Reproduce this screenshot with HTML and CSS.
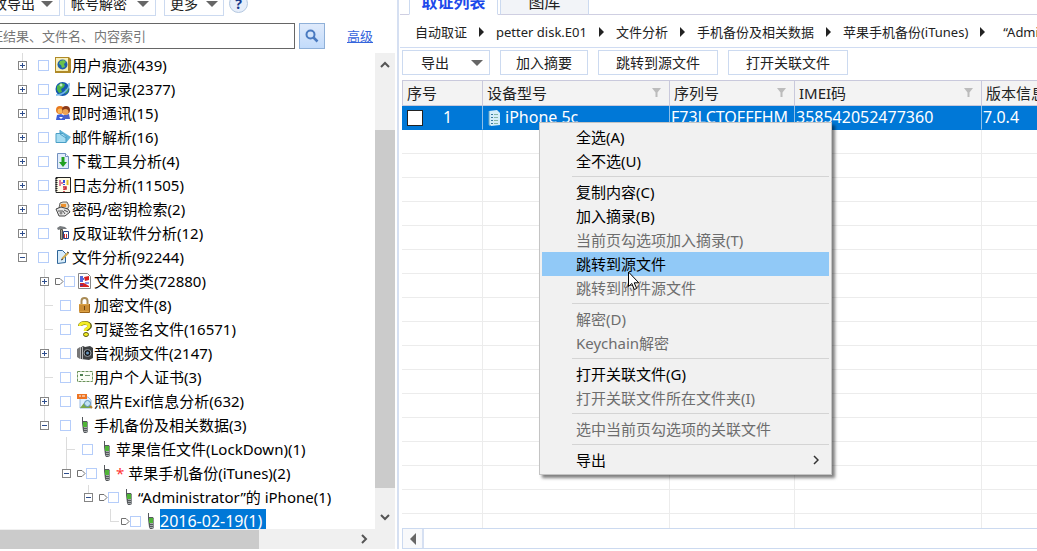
FILE: index.html
```html
<!DOCTYPE html>
<html lang="zh-CN">
<head>
<meta charset="utf-8">
<title>取证分析</title>
<link rel="stylesheet" href="styles.css">
</head>
<body>
<svg class="defs" aria-hidden="true">
  <symbol id="phone" viewBox="0 0 16 16"><path d="M5 0h1v4h4l1 2v9l-2 1H7l-1-2L5 6z" fill="#55595c"/><path d="M6 5h4v5H6z" fill="#4fb437"/><path d="M7 10h3v5H7z" fill="#a5a9ac"/><path d="M7 11.500h3M7 13.500h3" stroke="#55595c"/><path d="M10.500 6v9" stroke="#8b8f92"/></symbol>
  <symbol id="flag" viewBox="0 0 9 9"><path d="M.5 1.500h4.500l3 3-3 3H.5z" fill="#fff" stroke="#707070"/></symbol>
  <symbol id="filter" viewBox="0 0 10 10"><path d="M0 0h9L5.500 4.500V9h-2V4.500z" fill="#bcbcbc"/></symbol>
  <symbol id="down" viewBox="0 0 12 6"><path d="M0 0h12L6 6z" fill="#666"/></symbol>
  <symbol id="crumb" viewBox="0 0 5 10"><path d="M0 0l5 5-5 5z" fill="#222"/></symbol>
</svg>
<div class="app">
  <aside class="side">
    <div class="side-tools">
      <button class="tool tool-first">修改导出<svg width="12" height="6"><use href="#down"/></svg></button>
      <button class="tool tool-mid">帐号解密<svg width="12" height="6"><use href="#down"/></svg></button>
      <button class="tool tool-more">更多<svg width="12" height="6"><use href="#down"/></svg></button>
      <button class="help" aria-label="帮助">?</button>
    </div>
    <div class="search">
      <input class="search-box" type="text" placeholder="证结果、文件名、内容索引" aria-label="搜索">
      <button class="search-btn" aria-label="查找"><svg width="14" height="14" viewBox="0 0 14 14" fill="none" stroke="#4a7ac0"><circle cx="5.500" cy="5.500" r="4" stroke-width="2"/><path d="M8.500 8.500l4 4" stroke-width="2.500"/></svg></button>
      <a class="advanced" href="#">高级</a>
    </div>
    <div class="tree-area">
      <div class="tree-view">
        <ul class="tree">
          <li><div class="row"><button class="exp plus" aria-label="展开"></button><label class="pick"><input type="checkbox" aria-label="用户痕迹"></label>
            <svg class="ico" viewBox="0 0 16 16"><path d="M0 0h14l2 2v14H0z" fill="#b08a28"/><path d="M1 1h12v13H1z" fill="#f8efb8"/><circle cx="7.500" cy="7.500" r="5" fill="#1e5fae"/><path d="M5 4l4-1 2 2-2 2 1 3-3 1-1-3-2-1z" fill="#6ac24a"/></svg>
            <span class="name">用户痕迹(439)</span></div></li>
          <li><div class="row"><button class="exp plus" aria-label="展开"></button><label class="pick"><input type="checkbox" aria-label="上网记录"></label>
            <svg class="ico" viewBox="0 0 16 16"><circle cx="7.500" cy="8" r="7" fill="#1558b0"/><path d="M2 5l4-3 4 1-1 3-3 2 1 3-3 1-2-3z" fill="#4fb548"/><path d="M10 8l4-1-1 4-3 2z" fill="#3c9c5a"/><path d="M1 14C9 14 15 7 14 2" fill="none" stroke="#6fb5e8" stroke-width="1.500"/><circle cx="6" cy="4" r="1.500" fill="#c5e9c8"/></svg>
            <span class="name">上网记录(2377)</span></div></li>
          <li><div class="row"><button class="exp plus" aria-label="展开"></button><label class="pick"><input type="checkbox" aria-label="即时通讯"></label>
            <svg class="ico" viewBox="0 0 16 16"><path d="M1 15l1-5 4-1 4 2v4z" fill="#3d5fd8"/><path d="M8 14l1-4 5-1 1 5z" fill="#4a62c8"/><circle cx="5" cy="5" r="4" fill="#e8791e"/><circle cx="11" cy="5" r="4" fill="#8a3a1a"/><circle cx="5" cy="6" r="2.500" fill="#f6b95c"/><circle cx="10.500" cy="7" r="3" fill="#eda354"/><path d="M4 12l2 2 2-2z" fill="#fff"/></svg>
            <span class="name">即时通讯(15)</span></div></li>
          <li><div class="row"><button class="exp plus" aria-label="展开"></button><label class="pick"><input type="checkbox" aria-label="邮件解析"></label>
            <svg class="ico" viewBox="0 0 16 16"><path d="M5 1l11 7-5 6H5z" fill="#62b4d8"/><path d="M1 4.500h7l3 3v6H1z" fill="#a5dcf2" stroke="#4b9fc6"/><path d="M5 1v4l6 4" fill="none" stroke="#4b9fc6"/></svg>
            <span class="name">邮件解析(16)</span></div></li>
          <li><div class="row"><button class="exp plus" aria-label="展开"></button><label class="pick"><input type="checkbox" aria-label="下载工具分析"></label>
            <svg class="ico" viewBox="0 0 16 16"><path d="M2.500.5h8l3 3v12h-11z" fill="#e1ecfb" stroke="#7290bf"/><path d="M10.500.5v3h3" fill="#fff" stroke="#7290bf"/><path d="M6.500 4h3v5H12l-4 5-4-5h2.500z" fill="#20a020"/></svg>
            <span class="name">下载工具分析(4)</span></div></li>
          <li><div class="row"><button class="exp plus" aria-label="展开"></button><label class="pick"><input type="checkbox" aria-label="日志分析"></label>
            <svg class="ico" viewBox="0 0 16 16"><path d="M1 .5h14.500v15H1z" fill="#fffbe8" stroke="#222"/><path d="M1.500 1v14" stroke="#222" stroke-width="2" stroke-dasharray="1 1"/><path d="M5 3v6M4 6h4" stroke="#db7a9a" stroke-width="2"/><path d="M9 3v3M9 7v1" stroke="#3450e0" stroke-width="2"/><path d="M12.500 3v5" stroke="#e5ba24" stroke-width="2"/><path d="M8 10h3v2H9v1M9 14v1" stroke="#c61e2e" fill="none" stroke-width="1.500"/></svg>
            <span class="name">日志分析(11505)</span></div></li>
          <li><div class="row"><button class="exp plus" aria-label="展开"></button><label class="pick"><input type="checkbox" aria-label="密码/密钥检索"></label>
            <svg class="ico" viewBox="0 0 16 16"><path d="M4 7l1-5 3-1h4l2 4-2 4z" fill="#e8dcc4" stroke="#666"/><path d="M6 3h5v3H6z" fill="#ee912c"/><path d="M1 8l5-2 7 2 2 3-5 4H4z" fill="#e6e6e6" stroke="#444"/><path d="M3 10h5l2 3M9 9l4 2" stroke="#555" fill="none"/><circle cx="6" cy="12" r="1.500" fill="#888"/></svg>
            <span class="name">密码/密钥检索(2)</span></div></li>
          <li><div class="row"><button class="exp plus" aria-label="展开"></button><label class="pick"><input type="checkbox" aria-label="反取证软件分析"></label>
            <svg class="ico" viewBox="0 0 16 16"><path d="M2 3l3-2 5 1 2 2H7L3 5z" fill="#777b7e"/><path d="M5.500 4.500h2v10h-2z" fill="#a6a38e" stroke="#55524a"/><path d="M8.500 6.500h5v7h-5z" fill="#fff" stroke="#24448a"/><path d="M9.500 13v-4M11.500 13V9" stroke="#d03232"/></svg>
            <span class="name">反取证软件分析(12)</span></div></li>
          <li><div class="row"><button class="exp minus" aria-label="折叠"></button><label class="pick"><input type="checkbox" aria-label="文件分析"></label>
            <svg class="ico" viewBox="0 0 16 16"><path d="M2.500 1.500h5l3 3v9l-8 1z" fill="#d7ecfb" stroke="#2e6598"/><path d="M7 10l6-6" fill="none" stroke="#d0a94c" stroke-width="2"/><path d="M6 11l2-1M12 3l2 1" stroke="#333"/></svg>
            <span class="name">文件分析(92244)</span></div>
            <ul>
              <li><div class="row"><button class="exp plus" aria-label="展开"></button><label class="pick flagged"><svg width="9" height="9"><use href="#flag"/></svg><input type="checkbox" aria-label="文件分类"></label>
                <svg class="ico" viewBox="0 0 16 16"><path d="M1.500.5h9l3 3v12h-12z" fill="#fff" stroke="#888"/><path d="M3 4h3M3 6h4M3 8h3" stroke="#2038d0" stroke-width="1.500"/><path d="M7 4l5-1v4l-4 1zM3 10h4l5 3v1H3z" fill="#d82323"/><path d="M8 10h4M3 12h3" stroke="#2038d0"/></svg>
                <span class="name">文件分类(72880)</span></div></li>
              <li><div class="row"><span class="exp-none"></span><label class="pick"><input type="checkbox" aria-label="加密文件"></label>
                <svg class="ico" viewBox="0 0 16 16"><path d="M4.500 8V4a3 3 0 0 1 6 0v4" fill="none" stroke="#a98b55" stroke-width="2"/><path d="M2 7h11v8H2z" fill="#dca144"/><path d="M2 9h11M2 11h11M2 13h11" stroke="#b87b27"/><path d="M7 9h1v4H7z" fill="#6f4512"/><path d="M12.500 7v8.500h-10" fill="none" stroke="#996218"/></svg>
                <span class="name">加密文件(8)</span></div></li>
              <li><div class="row"><span class="exp-none"></span><label class="pick"><input type="checkbox" aria-label="可疑签名文件"></label>
                <svg class="ico" viewBox="0 0 16 16"><path d="M3 5c0-4 10-4 10 0 0 3-4 2-4 5" fill="none" stroke="#5e5c14" stroke-width="4"/><path d="M3 5c0-4 9-4 9 0 0 3-4 2-4 5" fill="none" stroke="#f3ec24" stroke-width="3"/><ellipse cx="9" cy="13.500" rx="2.500" ry="2" fill="#f3ec24" stroke="#5e5c14"/></svg>
                <span class="name">可疑签名文件(16571)</span></div></li>
              <li><div class="row"><button class="exp plus" aria-label="展开"></button><label class="pick"><input type="checkbox" aria-label="音视频文件"></label>
                <svg class="ico" viewBox="0 0 16 16"><path d="M0 4l3-2v12l-3-2z" fill="#777"/><path d="M3 3l3-2 2 1 5-1 3 2v10l-4 2-8-1z" fill="#3f4143"/><path d="M3.500 3v11M5.500 2v12" stroke="#bbb"/><circle cx="10.500" cy="8" r="3.500" fill="#17191b" stroke="#9aa0a6"/><circle cx="10.500" cy="8" r="1.500" fill="#6a96bd"/></svg>
                <span class="name">音视频文件(2147)</span></div></li>
              <li><div class="row"><span class="exp-none"></span><label class="pick"><input type="checkbox" aria-label="用户个人证书"></label>
                <svg class="ico" viewBox="0 0 16 16"><path d="M.5 2.500h15v10H.5z" fill="#fbfff6" stroke="#6b925a" stroke-dasharray="3 1"/><path d="M3 5h3v2H3z" fill="#4e8150"/><path d="M8 6.500h5M4 10.500h2" stroke="#739773"/></svg>
                <span class="name">用户个人证书(3)</span></div></li>
              <li><div class="row"><button class="exp plus" aria-label="展开"></button><label class="pick"><input type="checkbox" aria-label="照片Exif信息分析"></label>
                <svg class="ico" viewBox="0 0 16 16"><path d="M3 4h8l3 3v8H3z" fill="#dfefff" stroke="#9cbbe0"/><path d="M0 1h10v5H0z" fill="#ed7423"/><path d="M2 3h2M5 3h3" stroke="#fff"/><path d="M3 15l4-5 3 3 2-2 2 4z" fill="#7ba84a"/><circle cx="10.500" cy="10.500" r="3" fill="#c2e2f5" stroke="#5790b7"/><path d="M13 13l2 2" stroke="#b08030" stroke-width="2"/></svg>
                <span class="name">照片Exif信息分析(632)</span></div></li>
              <li><div class="row"><button class="exp minus" aria-label="折叠"></button><label class="pick"><input type="checkbox" aria-label="手机备份及相关数据"></label><svg class="ico"><use href="#phone"/></svg><span class="name">手机备份及相关数据(3)</span></div>
                <ul>
                  <li><div class="row"><span class="exp-none"></span><label class="pick"><input type="checkbox" aria-label="苹果信任文件"></label><svg class="ico"><use href="#phone"/></svg><span class="name">苹果信任文件(LockDown)(1)</span></div></li>
                  <li><div class="row"><button class="exp minus" aria-label="折叠"></button><label class="pick flagged"><svg width="9" height="9"><use href="#flag"/></svg><input type="checkbox" aria-label="苹果手机备份"></label><svg class="ico"><use href="#phone"/></svg><span class="name"><span class="star">*</span> 苹果手机备份(iTunes)(2)</span></div>
                    <ul>
                      <li><div class="row"><button class="exp minus" aria-label="折叠"></button><label class="pick flagged"><svg width="9" height="9"><use href="#flag"/></svg><input type="checkbox" aria-label="Administrator"></label><svg class="ico"><use href="#phone"/></svg><span class="name">“Administrator”的 iPhone(1)</span></div>
                        <ul>
                          <li><div class="row"><span class="exp-none"></span><label class="pick flagged"><svg width="9" height="9"><use href="#flag"/></svg><input type="checkbox" aria-label="2016-02-19"></label><svg class="ico"><use href="#phone"/></svg><span class="name selected">2016-02-19(1)</span></div></li>
                        </ul></li>
                    </ul></li>
                </ul></li>
            </ul></li>
        </ul>
      </div>
      <div class="vscroll">
        <svg width="10" height="7" viewBox="0 0 10 7"><path d="M1 6l4-4 4 4" fill="none" stroke="#555" stroke-width="2"/></svg>
        <div class="vthumb"></div>
        <svg width="10" height="7" viewBox="0 0 10 7"><path d="M1 1l4 4 4-4" fill="none" stroke="#555" stroke-width="2"/></svg>
      </div>
    </div>
    <div class="hscroll"><div class="hthumb"></div><svg width="7" height="10" viewBox="0 0 7 10"><path d="M1 1l4 4-4 4" fill="none" stroke="#555" stroke-width="2"/></svg></div>
  </aside>

  <main class="main">
    <nav class="tabs"><button class="tab active">取证列表</button><button class="tab">图库</button></nav>
    <nav class="crumbs">
      <span>自动取证</span><svg width="5" height="10"><use href="#crumb"/></svg>
      <span>petter disk.E01</span><svg width="5" height="10"><use href="#crumb"/></svg>
      <span>文件分析</span><svg width="5" height="10"><use href="#crumb"/></svg>
      <span>手机备份及相关数据</span><svg width="5" height="10"><use href="#crumb"/></svg>
      <span>苹果手机备份(iTunes)</span><svg width="5" height="10"><use href="#crumb"/></svg>
      <span class="crumb-last">“Administrator”的 iPhone</span>
    </nav>
    <div class="actions">
      <button class="action action-drop">导出<svg width="12" height="6"><use href="#down"/></svg></button>
      <button class="action">加入摘要</button>
      <button class="action action-wide">跳转到源文件</button>
      <button class="action action-wide">打开关联文件</button>
    </div>
    <div class="grid">
      <table>
        <colgroup><col class="c-no"><col class="c-model"><col class="c-serial"><col class="c-imei"><col class="c-ver"></colgroup>
        <thead><tr>
          <th>序号</th>
          <th><div class="head">设备型号<svg width="10" height="10"><use href="#filter"/></svg></div></th>
          <th><div class="head">序列号<svg width="10" height="10"><use href="#filter"/></svg></div></th>
          <th><div class="head">IMEI码<svg width="10" height="10"><use href="#filter"/></svg></div></th>
          <th>版本信息</th>
        </tr></thead>
        <tbody>
          <tr class="picked">
            <td><label class="num"><input type="checkbox">1</label></td>
            <td><div class="model"><svg width="12" height="16" viewBox="0 0 12 16"><path d="M1 1l8-1 3 3v12l-9 1-2-1z" fill="#d4eef9"/><path d="M1 1v14l2 1" fill="none" stroke="#6ba5c4"/><path d="M3 4.500h2M3 7.500h2M3 10.500h2M3 13.500h2" stroke="#38779e"/><path d="M6 4.500h4M6 7.500h4M6 10.500h4M6 13.500h4" stroke="#86b6a6"/></svg>iPhone 5c</div></td>
            <td>F73LCTQFFFHM</td><td>358542052477360</td><td>7.0.4</td>
          </tr>
          <tr><td></td><td></td><td></td><td></td><td></td></tr>
          <tr><td></td><td></td><td></td><td></td><td></td></tr>
          <tr><td></td><td></td><td></td><td></td><td></td></tr>
          <tr><td></td><td></td><td></td><td></td><td></td></tr>
          <tr><td></td><td></td><td></td><td></td><td></td></tr>
          <tr><td></td><td></td><td></td><td></td><td></td></tr>
          <tr><td></td><td></td><td></td><td></td><td></td></tr>
          <tr><td></td><td></td><td></td><td></td><td></td></tr>
          <tr><td></td><td></td><td></td><td></td><td></td></tr>
          <tr><td></td><td></td><td></td><td></td><td></td></tr>
          <tr><td></td><td></td><td></td><td></td><td></td></tr>
          <tr><td></td><td></td><td></td><td></td><td></td></tr>
          <tr><td></td><td></td><td></td><td></td><td></td></tr>
          <tr><td></td><td></td><td></td><td></td><td></td></tr>
          <tr><td></td><td></td><td></td><td></td><td></td></tr>
          <tr><td></td><td></td><td></td><td></td><td></td></tr>
          <tr><td></td><td></td><td></td><td></td><td></td></tr>
        </tbody>
      </table>
    </div>
    <div class="grid-scroll"><button aria-label="向左滚动"><svg width="6" height="12" viewBox="0 0 6 12"><path d="M6 0v12L0 6z" fill="#666"/></svg></button></div>
  </main>

  <div class="menu" role="menu">
    <button role="menuitem">全选(A)</button>
    <button role="menuitem">全不选(U)</button>
    <hr>
    <button role="menuitem">复制内容(C)</button>
    <button role="menuitem">加入摘录(B)</button>
    <button role="menuitem" disabled>当前页勾选项加入摘录(T)</button>
    <button role="menuitem" class="hot">跳转到源文件</button>
    <button role="menuitem" disabled>跳转到附件源文件</button>
    <hr>
    <button role="menuitem" disabled>解密(D)</button>
    <button role="menuitem" disabled>Keychain解密</button>
    <hr>
    <button role="menuitem">打开关联文件(G)</button>
    <button role="menuitem" disabled>打开关联文件所在文件夹(I)</button>
    <hr>
    <button role="menuitem" disabled>选中当前页勾选项的关联文件</button>
    <hr>
    <button role="menuitem">导出<svg width="6" height="10" viewBox="0 0 6 10"><path d="M1 1l4 4-4 4" fill="none" stroke="#333" stroke-width="1.500"/></svg></button>
  </div>
  <svg class="cursor" width="12" height="20" viewBox="0 0 12 20"><path d="M.5 1v14.500l3.300-3 2.500 6 2.400-1-2.500-5.700h4.600z" fill="#fff" stroke="#000"/></svg>
</div>
</body>
</html>
```

FILE: styles.css
```css
* { box-sizing: border-box; }

body {
  margin: 0;
  background: #fff;
  color: #000;
  font: 15px/24px "Noto Sans", "Noto Sans CJK SC", sans-serif;
}

button, input { font: inherit; color: inherit; margin: 0; padding: 0; }
svg { flex: none; display: block; }
.defs { display: none; }

.app {
  position: relative;
  display: flex;
  height: 100vh;
  padding-bottom: 2px;
  overflow: hidden;
}

/* Left pane */
.side {
  flex: 0 0 399px;
  display: flex;
  flex-direction: column;
  margin-right: 1px;
  border-right: 2px solid #d6e0f2;
  min-height: 0;
}

.side-tools {
  display: flex;
  align-items: flex-end;
  height: 16px;
  overflow: hidden;
  font-size: 14px;
}

.tool {
  display: flex;
  align-items: center;
  justify-content: flex-end;
  height: 25px;
  padding-right: 6px;
  margin-right: 4px;
  border: 1px solid #ccdaf0;
  background: #fff;
  color: #222;
  white-space: nowrap;
}
.tool-first { width: 60px; gap: 6px; border-left: 0; }
.tool-mid { width: 92px; gap: 10px; margin-right: 8px; }
.tool-more { width: 60px; gap: 8px; margin-right: 5px; padding-right: 5px; }

.help {
  width: 19px;
  height: 19px;
  margin-bottom: 3px;
  border: 1px solid #b4c8e0;
  border-radius: 50%;
  background: #e6eefa;
  color: #16398c;
  font-weight: bold;
  line-height: 16px;
}

.search {
  display: flex;
  align-items: center;
  height: 37px;
  padding-top: 3px;
  font-size: 13px;
}
.search-box {
  width: 307px;
  height: 26px;
  margin-left: -12px;
  padding-left: 1px;
  border: 1px solid #666;
  background: #fff;
}
.search-box::placeholder { color: #777; opacity: 1; }
.search-btn {
  display: grid;
  place-items: center;
  width: 26px;
  height: 26px;
  margin: 0 22px 0 4px;
  border: 1px solid #8fb0d8;
  background: linear-gradient(#dfeafb, #c2dbfb);
}
.advanced { color: #3565dc; }

.tree-area { flex: 1; display: flex; min-height: 0; margin-right: 2px; }
.tree-view { flex: 1; overflow: hidden; }

.tree, .tree ul { list-style: none; margin: 0; padding: 0; }
.tree { padding-left: 14px; }
.tree ul { padding-left: 22px; }
.tree li { position: relative; }
.tree li::before {
  content: "";
  position: absolute;
  top: 0;
  bottom: 0;
  left: 8px;
  width: 1px;
  background: #dcdcdc;
}
.tree li:last-child::before { bottom: auto; height: 12px; }

.row {
  display: flex;
  align-items: center;
  height: 24px;
  white-space: nowrap;
}
.exp, .exp-none { position: relative; flex: none; height: 9px; }
.exp { width: 9px; margin: 0 4px; border: 1px solid #858585; background: #fff; }
.exp::before, .exp.plus::after {
  content: "";
  position: absolute;
  inset: 3px 1px;
  background: #2d4d8d;
}
.exp.plus::after { inset: 1px 3px; }
.exp-none { width: 9px; height: 1px; margin-left: 8px; background: #dcdcdc; }

.pick { display: flex; align-items: center; width: 24px; padding-left: 7px; flex: none; }
.pick.flagged { padding-left: 2px; }
.pick input {
  appearance: none;
  width: 11px;
  height: 11px;
  border: 1px solid #b5cdfa;
  background: #fff;
}
.ico { width: 16px; height: 16px; margin-right: 1px; }
.name { line-height: 20px; }
.star { color: #f33; }
.selected { background: #0078d7; color: #fff; padding-right: 4px; font-size: 16px; line-height: 24px; }

.vscroll {
  display: flex;
  flex-direction: column;
  align-items: center;
  width: 20px;
  padding: 8px 0;
  background: #f0f0f0;
}
.vthumb { width: 100%; flex: 1; margin: 62px 0 26px; background: #cbcbcb; }
.hscroll {
  display: flex;
  align-items: center;
  justify-content: space-between;
  height: 20px;
  padding-right: 27px;
  margin-right: 2px;
  background: #f0f0f0;
}
.hthumb { width: 259px; height: 19px; background: #cbcbcb; }

/* Right pane */
.main {
  flex: 1;
  display: flex;
  flex-direction: column;
  min-width: 0;
  color: #222;
}
.tabs {
  display: flex;
  align-items: flex-end;
  height: 15px;
  padding-left: 9px;
  overflow: hidden;
  box-shadow: inset 0 -1px #cfcfe2;
  font-size: 16px;
}
.tab {
  width: 89px;
  height: 27px;
  margin-right: 2px;
  border: 1px solid #ccdaf0;
  border-bottom-color: #cfcfe2;
  background: #f2f4f8;
}
.tab.active { background: #fff; border-bottom-color: #fff; color: #1d49ea; font-weight: bold; }

.crumbs {
  display: flex;
  align-items: center;
  gap: 12px;
  height: 33px;
  padding: 2px 0 0 15px;
  border-bottom: 1px solid #d0dcf2;
  overflow: hidden;
  white-space: nowrap;
  font-size: 13px;
}
.crumbs span { flex: none; }
.crumb-last { padding-left: 6px; }

.actions { display: flex; gap: 10px; padding: 2px 2px 5px; font-size: 14px; }
.action {
  width: 88px;
  height: 25px;
  border: 1px solid #ccdaf0;
  background: #fff;
  line-height: 22px;
}
.action-wide { width: 120px; }
.action-drop {
  display: flex;
  align-items: center;
  justify-content: space-between;
  padding: 0 6px 0 18px;
}

.grid { flex: 1; min-height: 0; overflow: hidden; margin-left: 2px; }
table { width: 100%; min-width: 636px; table-layout: fixed; border-collapse: separate; border-spacing: 0; }
.c-no { width: 81px; }
.c-model { width: 187px; }
.c-serial { width: 125px; }
.c-imei { width: 187px; }
th {
  height: 26px;
  padding: 0 0 0 4px;
  border: solid #c9c9dc;
  border-width: 1px 1px 1px 0;
  background: #f3f3f3;
  font-weight: normal;
  text-align: left;
  white-space: nowrap;
  overflow: hidden;
}
th:first-child { border-left-width: 1px; }
.head { display: flex; align-items: center; justify-content: space-between; padding-right: 7px; }
td {
  height: 24px;
  padding: 0 0 0 1px;
  border: solid #ececec;
  border-width: 0 1px 1px 0;
  white-space: nowrap;
  overflow: hidden;
  font-size: 16px;
  line-height: 23px;
}
.picked td { background: #0078d7; color: #fff; border-right-color: #8fbfe8; border-bottom-color: #0078d7; }
.num { display: flex; align-items: center; gap: 20px; padding-left: 4px; }
.num input { appearance: none; width: 16px; height: 16px; border: 1px solid #222; background: #fff; }
.model { display: flex; align-items: center; gap: 5px; padding-left: 4px; }

.grid-scroll {
  height: 21px;
  margin-left: 2px;
  border: 1px solid #ccdaf0;
  border-right: 0;
}
.grid-scroll button {
  display: grid;
  place-items: center;
  width: 21px;
  height: 19px;
  border: 0;
  border-right: 2px solid #d6e0f2;
  background: #f8f9fb;
}

/* Context menu */
.menu {
  position: absolute;
  left: 539px;
  top: 122px;
  width: 293px;
  padding: 2px;
  border: 1px solid #c4c4c4;
  background: #f1f1f1;
  box-shadow: 3px 3px 3px rgba(0, 0, 0, .5);
}
.menu button {
  display: flex;
  align-items: center;
  justify-content: space-between;
  width: 100%;
  height: 24px;
  padding: 0 10px 0 34px;
  border: 0;
  background: none;
  color: #000;
}
.menu button:disabled { color: #6d6d6d; }
.menu .hot { background: #91c9f7; }
.menu hr { height: 1px; margin: 3px 0 3px 30px; border: 0; background: #d4d4d4; }
.cursor { position: absolute; left: 628px; top: 271px; }
```
